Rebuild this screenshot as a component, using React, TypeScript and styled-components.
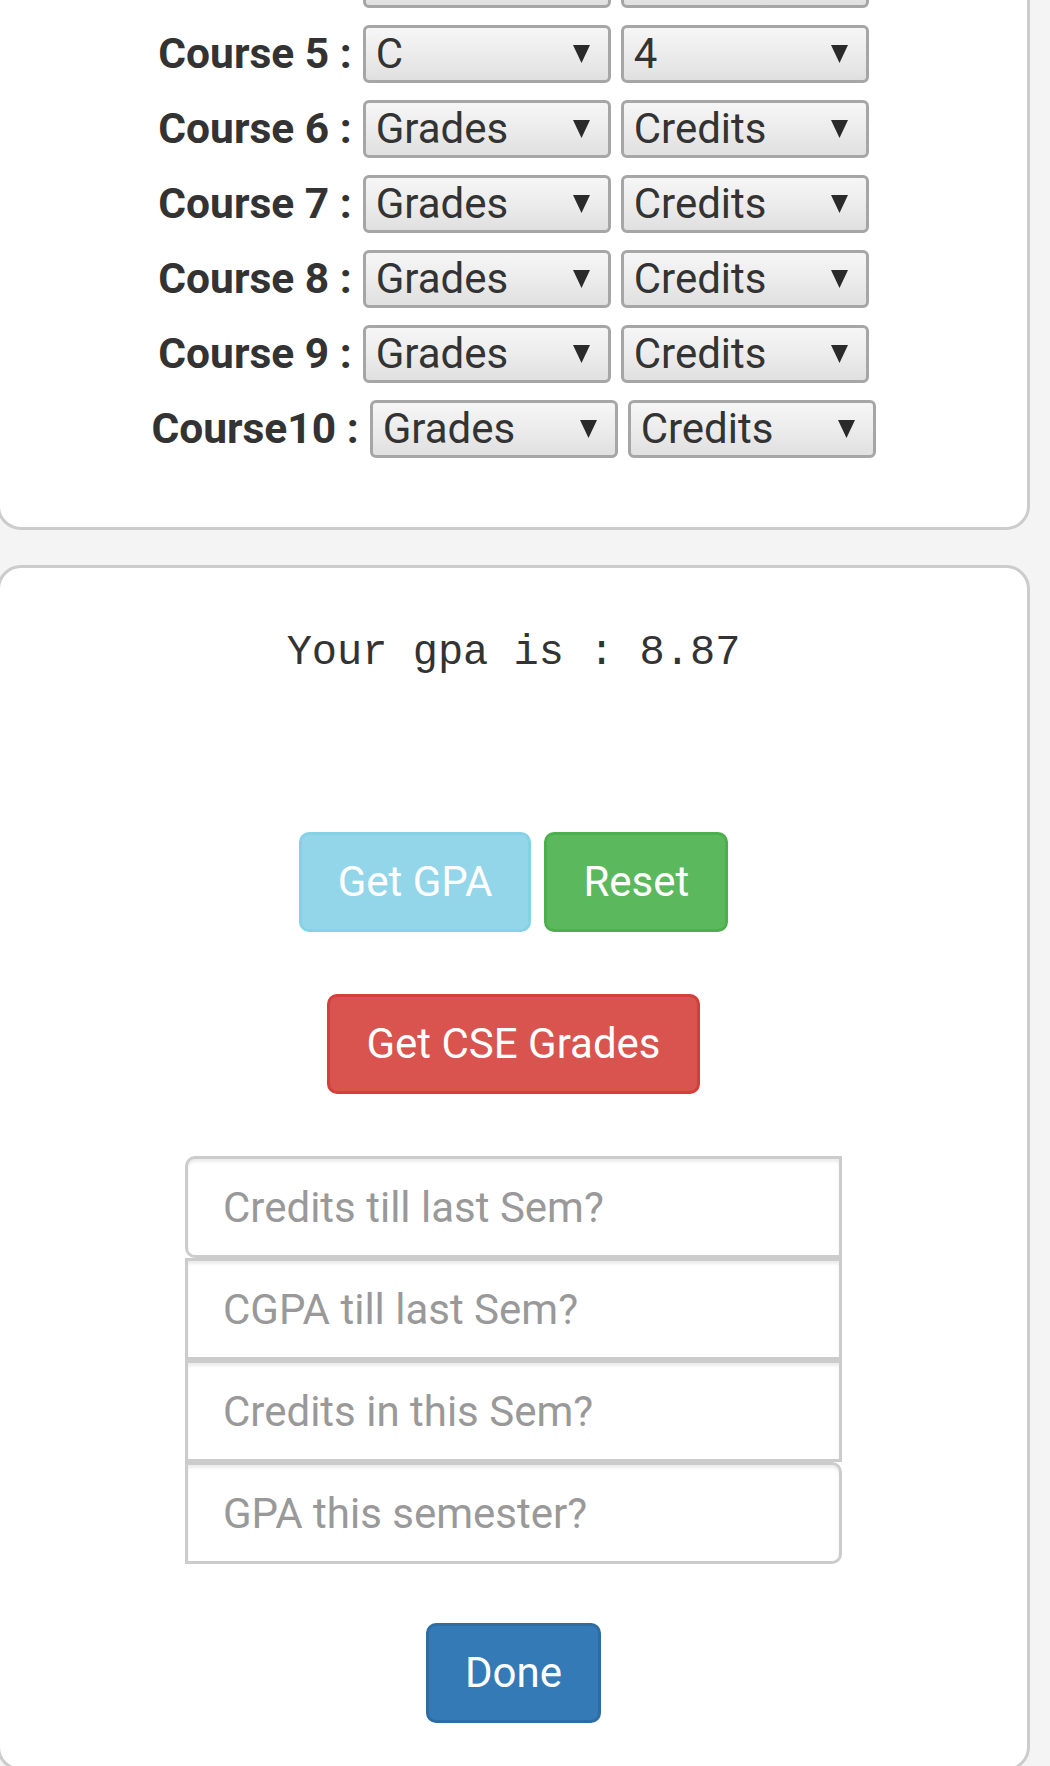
import React from "react";
import styled, { createGlobalStyle, css } from "styled-components";

const GlobalStyle = createGlobalStyle`
  html, body {
    margin: 0;
    padding: 0;
    background: #f4f4f4;
    overflow: hidden;
  }
  body {
    font-family: Roboto, "Noto Sans", Arial, sans-serif;
    color: #333;
  }
  *, *::before, *::after { box-sizing: border-box; }
`;

const Page = styled.main`
  display: flex;
  flex-direction: column;
  gap: 35px;
  margin: -308px 20px 0 -3px;
`;

const Card = styled.section<{ $pt: number; $pb: number }>`
  background: #fff;
  border: 3px solid #cccccc;
  border-radius: 24px;
  padding: ${(p) => p.$pt}px 0 ${(p) => p.$pb}px;
  display: flex;
  flex-direction: column;
  align-items: center;
`;

const CourseList = styled.div`
  display: flex;
  flex-direction: column;
  align-items: center;
  gap: 17px;
`;

const CourseRow = styled.div`
  display: flex;
  align-items: center;
  gap: 10px;
`;

const CourseLabel = styled.label`
  font-size: 42.5px;
  font-weight: 700;
  color: #333;
  white-space: pre;
  line-height: 1;
  margin-right: 1px;
`;

const Dropdown = styled.div`
  width: 248px;
  height: 58px;
  border: 3px solid #a6a6a6;
  border-radius: 6px;
  background: linear-gradient(to bottom, #f6f6f6 0%, #ececec 50%, #e0e0e0 100%);
  display: flex;
  align-items: center;
  justify-content: space-between;
  padding: 0 18px 0 10px;
  font-size: 42px;
  line-height: 1;
  color: #333;
`;

const Arrow = styled.svg`
  width: 17px;
  height: 18px;
  flex: none;
`;

const GpaText = styled.div`
  font-family: "Liberation Mono", "DejaVu Sans Mono", monospace;
  font-size: 42px;
  line-height: 50px;
  height: 50px;
  margin-top: 60px;
  white-space: pre;
  color: #333;
`;

type Variant = "info" | "success" | "danger" | "primary";

const variants: Record<Variant, ReturnType<typeof css>> = {
  info: css`
    background: #94d6e9;
    border-color: #87d1e7;
  `,
  success: css`
    background: #5cb85c;
    border-color: #4cae4c;
  `,
  danger: css`
    background: #d9534f;
    border-color: #d43f3a;
  `,
  primary: css`
    background: #337ab7;
    border-color: #2e6da4;
  `,
};

const ButtonRow = styled.div<{ $mt: number }>`
  display: flex;
  gap: 13px;
  margin-top: ${(p) => p.$mt}px;
`;

const Button = styled.button<{ $variant: Variant }>`
  height: 100px;
  padding: 0 36px;
  border: 3px solid;
  border-radius: 10px;
  font-family: Roboto, "Noto Sans", Arial, sans-serif;
  font-size: 42px;
  line-height: 1;
  color: #fff;
  cursor: pointer;
  ${(p) => variants[p.$variant]}
`;

const InputStack = styled.div`
  display: flex;
  flex-direction: column;
  width: 657px;
  margin-top: 62px;
`;

const TextInput = styled.input<{ $pos: "first" | "middle" | "last" }>`
  width: 100%;
  height: 102px;
  border: 3px solid #cccccc;
  border-radius: ${(p) =>
    p.$pos === "first" ? "10px 0 0 10px" : p.$pos === "last" ? "0 10px 10px 0" : "0"};
  box-shadow: inset 0 3px 3px rgba(0, 0, 0, 0.075);
  padding: 0 35px;
  font-family: Roboto, "Noto Sans", Arial, sans-serif;
  font-size: 42px;
  color: #555;
  background: #fff;
  outline: none;
  &::placeholder {
    color: #999;
  }
`;

const courses: { name: string; grade: string; credit: string }[] = [
  { name: "Course 1 :", grade: "A", credit: "4" },
  { name: "Course 2 :", grade: "S", credit: "4" },
  { name: "Course 3 :", grade: "A", credit: "3" },
  { name: "Course 4 :", grade: "B", credit: "3" },
  { name: "Course 5 :", grade: "C", credit: "4" },
  { name: "Course 6 :", grade: "Grades", credit: "Credits" },
  { name: "Course 7 :", grade: "Grades", credit: "Credits" },
  { name: "Course 8 :", grade: "Grades", credit: "Credits" },
  { name: "Course 9 :", grade: "Grades", credit: "Credits" },
  { name: "Course10 :", grade: "Grades", credit: "Credits" },
];

const placeholders = [
  "Credits till last Sem?",
  "CGPA till last Sem?",
  "Credits in this Sem?",
  "GPA this semester?",
];

function Select({ value }: { value: string }) {
  return (
    <Dropdown role="combobox">
      <span>{value}</span>
      <Arrow viewBox="0 0 17 18" aria-hidden>
        <polygon points="0,0 17,0 8.5,18" fill="#2a2a2a" />
      </Arrow>
    </Dropdown>
  );
}

export default function App() {
  return (
    <>
      <GlobalStyle />
      <Page>
        <Card $pt={30} $pb={69}>
          <CourseList>
            {courses.map((c) => (
              <CourseRow key={c.name}>
                <CourseLabel>{c.name}</CourseLabel>
                <Select value={c.grade} />
                <Select value={c.credit} />
              </CourseRow>
            ))}
          </CourseList>
        </Card>
        <Card $pt={0} $pb={45}>
          <GpaText>Your gpa is : 8.87</GpaText>
          <ButtonRow $mt={154}>
            <Button $variant="info" disabled>
              Get GPA
            </Button>
            <Button $variant="success">Reset</Button>
          </ButtonRow>
          <ButtonRow $mt={62}>
            <Button $variant="danger">Get CSE Grades</Button>
          </ButtonRow>
          <InputStack>
            {placeholders.map((ph, i) => (
              <TextInput
                key={ph}
                type="number"
                placeholder={ph}
                $pos={i === 0 ? "first" : i === placeholders.length - 1 ? "last" : "middle"}
              />
            ))}
          </InputStack>
          <ButtonRow $mt={59}>
            <Button $variant="primary">Done</Button>
          </ButtonRow>
        </Card>
      </Page>
    </>
  );
}
